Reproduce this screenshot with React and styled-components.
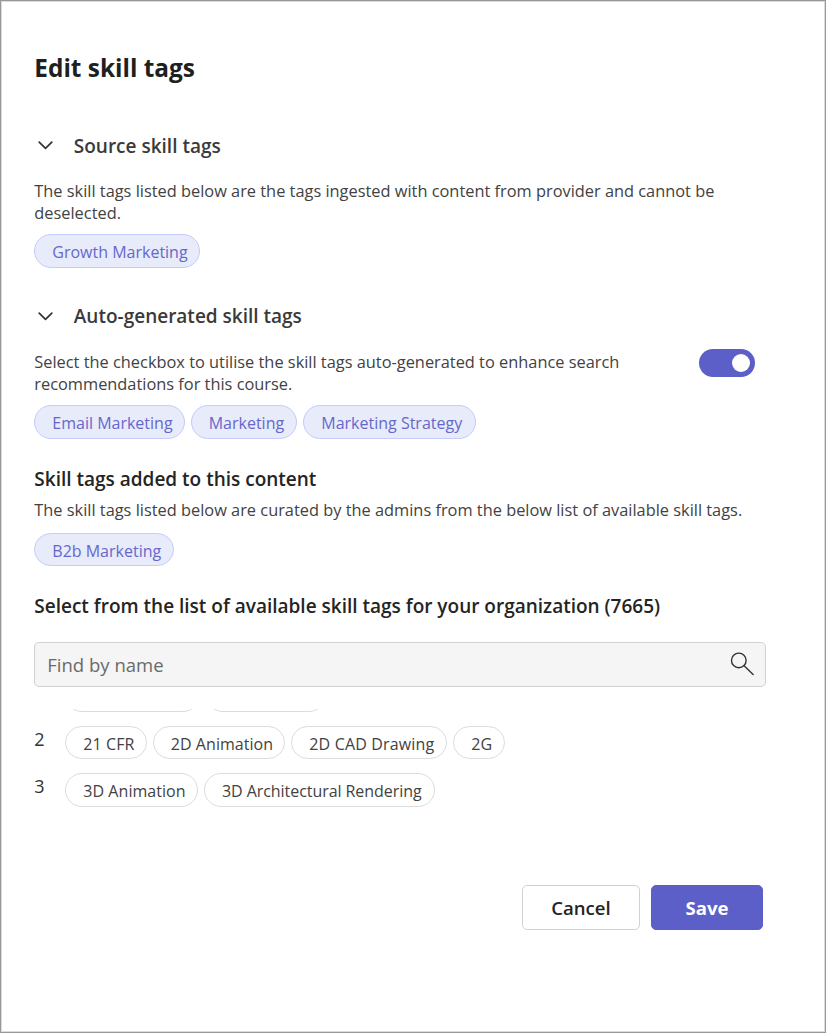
import React from "react";
import styled, { createGlobalStyle } from "styled-components";

const GlobalStyle = createGlobalStyle`
  *, *::before, *::after { box-sizing: border-box; }
  body { margin: 0; background: #fff; }
  body, button, input { font-family: "Open Sans", "Noto Sans", sans-serif; }
  h1, h2, p { margin: 0; }
`;

const Dialog = styled.main`
  width: 826px;
  height: 1033px;
  padding: 50px 59px 0 33.3px;
  border: 1px solid #989898;
  box-shadow: inset 0 0 0 1px #dcdcdc;
  background: #fff;
  overflow: hidden;
`;

const Title = styled.h1`
  font-size: 24.4px;
  line-height: 34px;
  font-weight: 700;
  color: #201f1f;
`;

const Section = styled.section`
  margin-top: ${(p) => p.$top}px;
`;

const Toggle = styled.div`
  display: flex;
  align-items: center;
  height: 28px;
  padding-left: 4px;
  gap: 20.5px;
`;

const SectionTitle = styled.h2`
  font-size: 19px;
  line-height: 27px;
  font-weight: 600;
  white-space: nowrap;
  color: #3b3a3a;
`;

const Heading = styled.h2`
  font-size: 19px;
  line-height: 26px;
  font-weight: 600;
  white-space: nowrap;
  color: #242424;
`;

const Text = styled.p`
  font-size: 16.38px;
  line-height: 22px;
  color: #424242;
  white-space: nowrap;
`;

const SplitRow = styled.div`
  display: flex;
  justify-content: space-between;
  align-items: flex-start;
  padding-right: 11px;
`;

const Switch = styled.button`
  display: flex;
  justify-content: flex-end;
  align-items: center;
  width: 56px;
  height: 28px;
  margin-top: -2px;
  padding: 0 5.5px;
  border: 0;
  border-radius: 14px;
  background: #5b5fc7;
`;

const Knob = styled.span`
  width: 18px;
  height: 18px;
  border-radius: 50%;
  background: #fff;
`;

const Chips = styled.div`
  display: flex;
  gap: 6px;
  margin-top: ${(p) => p.$top || 0}px;
`;

const Chip = styled.span`
  flex: none;
  width: ${(p) => p.$w}px;
  height: 33.5px;
  padding: 2px 0 0 17px;
  border: 1px solid ${(p) => (p.$selected ? "#c5cbfa" : "#dcdcdc")};
  border-radius: 17px;
  background: ${(p) => (p.$selected ? "#e8ebfa" : "#fff")};
  color: ${(p) => (p.$selected ? "#6568cb" : "#424242")};
  font-size: 16px;
  line-height: 30.5px;
  white-space: nowrap;
  letter-spacing: ${(p) => p.$spacing || 0}px;
`;

const SearchBox = styled.label`
  display: flex;
  align-items: center;
  justify-content: space-between;
  width: 732px;
  height: 45px;
  margin-top: 23px;
  padding: 0 11px 0 12px;
  border: 1px solid #d1d1d1;
  border-radius: 5px;
  background: #f5f5f5;
`;

const SearchInput = styled.input`
  flex: 1;
  height: 30px;
  padding: 1px 0 0;
  border: 0;
  outline: 0;
  background: transparent;
  font-size: 18.5px;
  line-height: 28px;
  color: #424242;
  &::placeholder { color: #6a6a6a; opacity: 1; }
`;

const TagList = styled.div`
  display: flex;
  flex-direction: column;
  justify-content: flex-end;
  gap: 14px;
  height: 97.8px;
  margin-top: 22px;
  overflow: hidden;
`;

const TagGroup = styled.div`
  display: flex;
  align-items: flex-start;
`;

const GroupIndex = styled.span`
  width: 31px;
  font-size: 18px;
  line-height: 27.6px;
  color: #333;
`;

const Actions = styled.footer`
  display: flex;
  justify-content: flex-end;
  gap: 11px;
  margin-top: 78.2px;
  padding-right: 3px;
`;

const Button = styled.button`
  width: ${(p) => p.$w}px;
  height: 45px;
  padding: 0;
  border: 1px solid ${(p) => (p.$primary ? "#5b5fc7" : "#d1d1d1")};
  border-radius: 5px;
  background: ${(p) => (p.$primary ? "#5b5fc7" : "#fff")};
  color: ${(p) => (p.$primary ? "#fff" : "#242424")};
  font-size: 18.6px;
  font-weight: ${(p) => (p.$primary ? 700 : 600)};
`;

const Chevron = () => (
  <svg width="15" height="10" viewBox="0 0 15 10" fill="none" stroke="#333" strokeWidth="1.7" strokeLinecap="round" strokeLinejoin="round">
    <path d="M1.2 1.2 7.5 7.4 13.8 1.2" />
  </svg>
);

const SearchIcon = () => (
  <svg width="24" height="24" viewBox="0 0 24 24" fill="none" stroke="#333" strokeWidth="1.4" strokeLinecap="round">
    <circle cx="8.8" cy="8.4" r="7.3" />
    <path d="M14.1 13.7 23.1 22.5" />
  </svg>
);

const available = [
  { index: "", tags: [["", 135], ["", 120]] },
  { index: "2", tags: [["21 CFR", 81.5, 0.1], ["2D Animation", 132.5, 0.05], ["2D CAD Drawing", 156, 0.15], ["2G", 51.5]] },
  { index: "3", tags: [["3D Animation", 132.7, 0.05], ["3D Architectural Rendering", 230.8, -0.06]] },
];

export default function App() {
  return (
    <>
      <GlobalStyle />
      <Dialog>
        <Title>Edit skill tags</Title>
        <Section $top={47}>
          <Toggle><Chevron /><SectionTitle>Source skill tags</SectionTitle></Toggle>
          <Section $top={20}>
            <Text>The skill tags listed below are the tags ingested with content from provider and cannot be<br />deselected.</Text>
          </Section>
          <Chips $top={10.3}><Chip $selected $w={165.7}>Growth Marketing</Chip></Chips>
        </Section>
        <Section $top={35.2}>
          <Toggle><Chevron /><SectionTitle>Auto-generated skill tags</SectionTitle></Toggle>
          <Section $top={20}>
            <SplitRow>
              <Text>Select the checkbox to utilise the skill tags auto-generated to enhance search<br />recommendations for this course.</Text>
              <Switch role="switch" aria-checked="true"><Knob /></Switch>
            </SplitRow>
          </Section>
          <Chips $top={10.2}>
            <Chip $selected $w={150.4}>Email Marketing</Chip>
            <Chip $selected $w={106.6}>Marketing</Chip>
            <Chip $selected $w={172.4}>Marketing Strategy</Chip>
          </Chips>
        </Section>
        <Section $top={27.3}>
          <Heading>Skill tags added to this content</Heading>
          <Section $top={7}>
            <Text>The skill tags listed below are curated by the admins from the below list of available skill tags.</Text>
          </Section>
          <Chips $top={11.6}><Chip $selected $w={140}>B2b Marketing</Chip></Chips>
        </Section>
        <Section $top={26.9}>
          <Heading>Select from the list of available skill tags for your organization (7665)</Heading>
          <SearchBox>
            <SearchInput placeholder="Find by name" />
            <SearchIcon />
          </SearchBox>
          <TagList>
            {available.map((group, i) => (
              <TagGroup key={i}>
                <GroupIndex>{group.index}</GroupIndex>
                <Chips>
                  {group.tags.map(([name, w, spacing], j) => (
                    <Chip key={j} $w={w} $spacing={spacing}>{name}</Chip>
                  ))}
                </Chips>
              </TagGroup>
            ))}
          </TagList>
        </Section>
        <Actions>
          <Button $w={118}>Cancel</Button>
          <Button $primary $w={112}>Save</Button>
        </Actions>
      </Dialog>
    </>
  );
}
